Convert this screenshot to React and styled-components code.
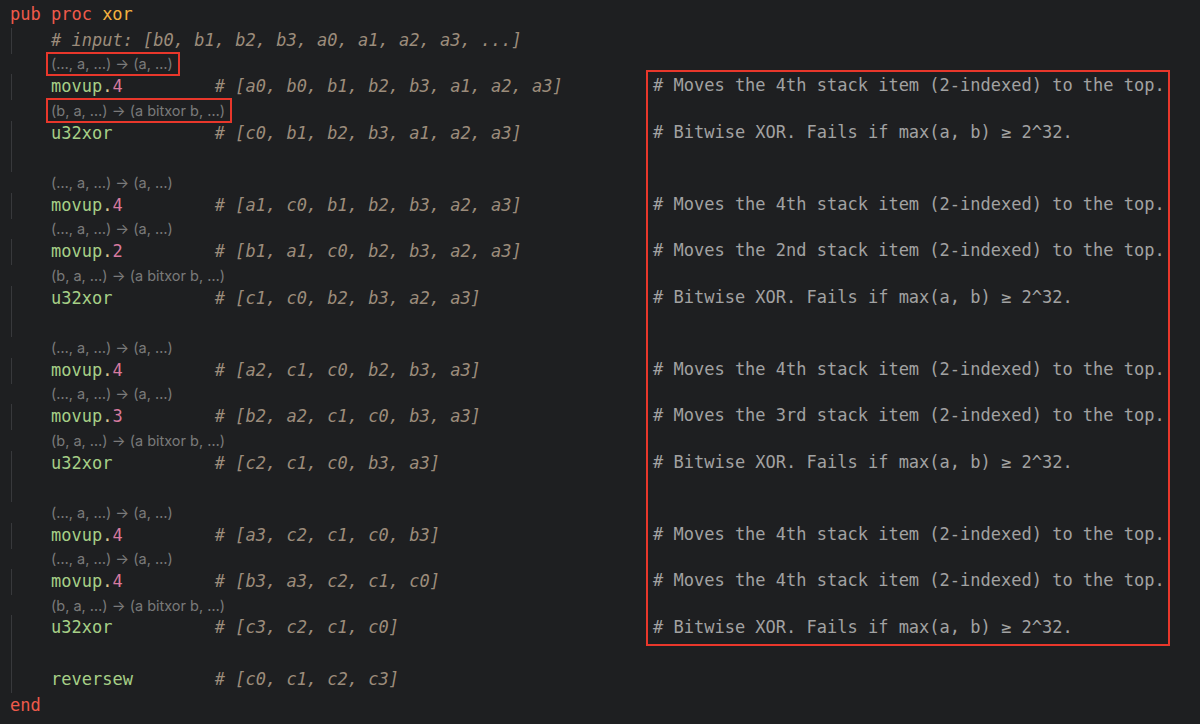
import React from "react";
import styled, { createGlobalStyle } from "styled-components";

const LINE = 25.8;
const HINT = 20.6;

const Global = createGlobalStyle`
  html, body { margin: 0; padding: 0; background: #1e1f21; }
  body { width: 1200px; height: 724px; overflow: hidden; }
`;

const Editor = styled.div`
  display: flex;
  align-items: flex-start;
  height: 724px;
  box-sizing: border-box;
  padding: 2px 0 0 10px;
  background: #1e1f21;
  font-family: "DejaVu Sans Mono", "Liberation Mono", monospace;
  font-size: 17px;
  color: #c8c8c8;
`;

const CodeColumn = styled.div`
  width: 636px;
  flex: none;
  display: flex;
  flex-direction: column;
`;

const Line = styled.div`
  height: ${LINE}px;
  line-height: ${LINE}px;
  white-space: pre;
  display: flex;
  align-items: center;
  box-sizing: border-box;
  ${(p) =>
    p.$indented
      ? `margin-left: 1px; border-left: 1px solid #38393c; padding-left: 39px;`
      : ``}
`;

const HintLine = styled.div`
  height: ${HINT}px;
  display: flex;
  align-items: stretch;
  padding-left: 38px;
`;

const Hint = styled.span`
  display: inline-flex;
  align-items: center;
  padding: 0 5px 0 3px;
  font-family: "Inter", "Noto Sans", sans-serif;
  font-size: 14.5px;
  color: #7a7a7a;
  white-space: pre;
  outline: ${(p) => (p.$marked ? "2px solid #e8372b" : "none")};
`;

const Keyword = styled.span`
  color: #ee5a4b;
`;
const ProcName = styled.span`
  color: #f4b13f;
`;
const Op = styled.span`
  display: inline-block;
  width: 16ch;
  color: #a6cf87;
`;
const Dot = styled.span`
  color: #dcc48e;
`;
const Imm = styled.span`
  color: #d77a9f;
`;
const Comment = styled.span`
  color: #9c8c7b;
  font-style: italic;
`;

const DocColumn = styled.div`
  flex: none;
  margin-top: 68px;
`;

const DocBox = styled.div`
  width: 524px;
  box-sizing: border-box;
  border: 2px solid #e8372b;
  padding: 1.3px 0 3.6px 5px;
  display: flex;
  flex-direction: column;
`;

const DocRow = styled.div`
  height: ${(p) => (p.$hint ? HINT : LINE)}px;
  line-height: ${(p) => (p.$hint ? HINT : LINE)}px;
  white-space: pre;
  color: #a2a2a2;
`;

const MOVES = (n) => `# Moves the ${n} stack item (2-indexed) to the top.`;
const XOR = "# Bitwise XOR. Fails if max(a, b) ≥ 2^32.";
const H_MOV = "(…, a, …) → (a, …)";
const H_XOR = "(b, a, …) → (a bitxor b, …)";

const lines = [
  { k: "head" },
  { k: "comment", text: "# input: [b0, b1, b2, b3, a0, a1, a2, a3, ...]" },
  { k: "hint", text: H_MOV, mark: true },
  { k: "op", op: "movup", imm: "4", c: "# [a0, b0, b1, b2, b3, a1, a2, a3]", doc: MOVES("4th") },
  { k: "hint", text: H_XOR, mark: true },
  { k: "op", op: "u32xor", c: "# [c0, b1, b2, b3, a1, a2, a3]", doc: XOR },
  { k: "blank" },
  { k: "hint", text: H_MOV },
  { k: "op", op: "movup", imm: "4", c: "# [a1, c0, b1, b2, b3, a2, a3]", doc: MOVES("4th") },
  { k: "hint", text: H_MOV },
  { k: "op", op: "movup", imm: "2", c: "# [b1, a1, c0, b2, b3, a2, a3]", doc: MOVES("2nd") },
  { k: "hint", text: H_XOR },
  { k: "op", op: "u32xor", c: "# [c1, c0, b2, b3, a2, a3]", doc: XOR },
  { k: "blank" },
  { k: "hint", text: H_MOV },
  { k: "op", op: "movup", imm: "4", c: "# [a2, c1, c0, b2, b3, a3]", doc: MOVES("4th") },
  { k: "hint", text: H_MOV },
  { k: "op", op: "movup", imm: "3", c: "# [b2, a2, c1, c0, b3, a3]", doc: MOVES("3rd") },
  { k: "hint", text: H_XOR },
  { k: "op", op: "u32xor", c: "# [c2, c1, c0, b3, a3]", doc: XOR },
  { k: "blank" },
  { k: "hint", text: H_MOV },
  { k: "op", op: "movup", imm: "4", c: "# [a3, c2, c1, c0, b3]", doc: MOVES("4th") },
  { k: "hint", text: H_MOV },
  { k: "op", op: "movup", imm: "4", c: "# [b3, a3, c2, c1, c0]", doc: MOVES("4th") },
  { k: "hint", text: H_XOR },
  { k: "op", op: "u32xor", c: "# [c3, c2, c1, c0]", doc: XOR },
  { k: "blank" },
  { k: "op", op: "reversew", c: "# [c0, c1, c2, c3]" },
  { k: "end" },
];

function CodeLine({ line }) {
  switch (line.k) {
    case "head":
      return (
        <Line>
          <Keyword>pub proc </Keyword>
          <ProcName>xor</ProcName>
        </Line>
      );
    case "end":
      return (
        <Line>
          <Keyword>end</Keyword>
        </Line>
      );
    case "comment":
      return (
        <Line $indented>
          <Comment>{line.text}</Comment>
        </Line>
      );
    case "hint":
      return (
        <HintLine>
          <Hint $marked={line.mark}>{line.text}</Hint>
        </HintLine>
      );
    case "blank":
      return <Line $indented />;
    default:
      return (
        <Line $indented>
          <Op>
            {line.op}
            {line.imm && (
              <>
                <Dot>.</Dot>
                <Imm>{line.imm}</Imm>
              </>
            )}
          </Op>
          <Comment>{line.c}</Comment>
        </Line>
      );
  }
}

export default function App() {
  const docLines = lines.slice(3, 27);
  return (
    <>
      <Global />
      <Editor>
        <CodeColumn>
          {lines.map((l, i) => (
            <CodeLine key={i} line={l} />
          ))}
        </CodeColumn>
        <DocColumn>
          <DocBox>
            {docLines.map((l, i) => (
              <DocRow key={i} $hint={l.k === "hint"}>
                {l.doc || ""}
              </DocRow>
            ))}
          </DocBox>
        </DocColumn>
      </Editor>
    </>
  );
}
